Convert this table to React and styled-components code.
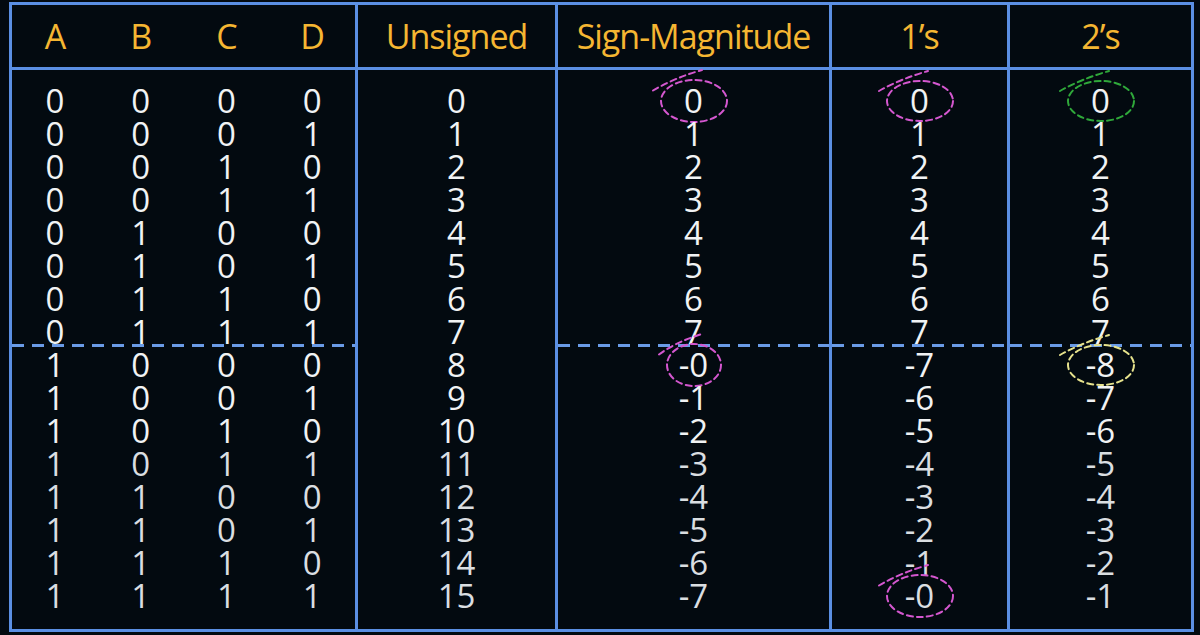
import React from 'react'
import styled, { createGlobalStyle, css } from 'styled-components'

const colors = {
  bg: '#030a10',
  line: '#5b8fe3',
  dash: '#6a9be6',
  head: '#f5b632',
  text: '#f1f3f4',
  pink: '#d457cf',
  green: '#2fa83a',
  yellow: '#e6e28c',
}

const GlobalStyle = createGlobalStyle`
  html, body {
    margin: 0;
    background: ${colors.bg};
  }
  body {
    font-family: 'Open Sans', 'Liberation Sans', sans-serif;
  }
`

const Page = styled.div`
  width: 1200px;
  height: 635px;
  padding: 2px 0 0 9px;
  box-sizing: border-box;
`

const Table = styled.div`
  display: grid;
  grid-template-columns: 343px 197px 271px 175px 181px;
  grid-template-rows: 62px 559px;
  gap: 3px;
  width: max-content;
  border: 3px solid ${colors.line};
  background: ${colors.line};
`

const HeadCell = styled.div`
  display: flex;
  align-items: center;
  justify-content: center;

  background: ${colors.bg};
  color: ${colors.head};
  font-size: 34px;
  letter-spacing: -1px;
`

const HeadBits = styled(HeadCell)`
  display: grid;
  grid-template-columns: repeat(4, 1fr);
  justify-items: center;
`

const BodyCell = styled.div`
  background: ${colors.bg};
  color: ${colors.text};
  font-size: 33px;
  line-height: 33px;
  padding-top: 14px;
`

const Half = styled.div`
  position: relative;

  ${props =>
    props.$dashed &&
    css`
      &::before {
        content: '';
        position: absolute;
        top: -4px;
        left: 0;
        right: 0;
        height: 3px;
        background: repeating-linear-gradient(
          to right,
          ${colors.dash} 0 12px,
          transparent 12px 20px
        );
      }
    `}
`

const Line = styled.div`
  height: 33px;
  display: flex;
  align-items: center;
  justify-content: center;
  color: ${props => (props.$dim ? '#dadee1' : colors.text)};
`

const BitsLine = styled(Line)`
  display: grid;
  grid-template-columns: repeat(4, 1fr);
  justify-items: center;
`

const Value = styled.span`
  position: relative;
  display: inline-block;
`

const Ring = styled.svg`
  position: absolute;
  left: 50%;
  top: 50%;
  overflow: visible;
  pointer-events: none;
`

const Circle = ({ color, rx = 32, ry = 20 }) => {
  const cx = rx + 10
  const cy = ry + 12
  const w = rx * 2 + 20
  const h = ry * 2 + 22
  const tail = `M 2 ${cy - ry * 0.5} Q ${rx * 0.7} ${cy - ry - 2} ${cx + 8} ${cy - ry - 10}`
  return (
    <Ring
      width={w}
      height={h}
      style={{ transform: `translate(${-cx}px, ${-cy}px)` }}
      viewBox={`0 0 ${w} ${h}`}
    >
      <g fill="none" stroke={color} strokeWidth="2" strokeDasharray="6 4" strokeLinecap="round">
        <ellipse cx={cx} cy={cy} rx={rx} ry={ry} />
        <path d={tail} />
      </g>
    </Ring>
  )
}

const rows = Array.from({ length: 16 }, (_, i) => ({
  bits: [(i >> 3) & 1, (i >> 2) & 1, (i >> 1) & 1, i & 1],
  unsigned: `${i}`,
  sm: i < 8 ? `${i}` : `-${i - 8}`,
  ones: i < 8 ? `${i}` : i === 15 ? '-0' : `${i - 15}`,
  twos: i < 8 ? `${i}` : `${i - 16}`,
}))

const marks = {
  sm: { 0: { color: colors.pink, rx: 33, ry: 21 }, 8: { color: colors.pink, rx: 27, ry: 21 } },
  ones: { 0: { color: colors.pink, rx: 33, ry: 20 }, 15: { color: colors.pink, rx: 33, ry: 21 } },
  twos: { 0: { color: colors.green, rx: 33, ry: 20 }, 8: { color: colors.yellow, rx: 33, ry: 20 } },
}

const ValueColumn = ({ field, dashed }) => {
  const renderRow = (row, i) => {
    const mark = marks[field] && marks[field][i]
    return (
      <Line key={i} $dim={i > 10}>
        <Value>
          {row[field]}
          {mark && <Circle {...mark} />}
        </Value>
      </Line>
    )
  }
  return (
    <BodyCell>
      <Half>{rows.slice(0, 8).map((r, i) => renderRow(r, i))}</Half>
      <Half $dashed={dashed}>{rows.slice(8).map((r, i) => renderRow(r, i + 8))}</Half>
    </BodyCell>
  )
}

const BitsRow = ({ row, dim }) => (
  <BitsLine $dim={dim}>
    {row.bits.map((b, j) => <span key={j}>{b}</span>)}
  </BitsLine>
)

const BitsColumn = () => (
  <BodyCell>
    <Half>
      {rows.slice(0, 8).map((r, i) => <BitsRow key={i} row={r} />)}
    </Half>
    <Half $dashed>
      {rows.slice(8).map((r, i) => <BitsRow key={i} row={r} dim={i + 8 > 10} />)}
    </Half>
  </BodyCell>
)

export default function App() {
  return (
    <Page>
      <GlobalStyle />
      <Table>
        <HeadBits>
          <span>A</span>
          <span>B</span>
          <span>C</span>
          <span>D</span>
        </HeadBits>
        <HeadCell>Unsigned</HeadCell>
        <HeadCell>Sign-Magnitude</HeadCell>
        <HeadCell>1’s</HeadCell>
        <HeadCell>2’s</HeadCell>

        <BitsColumn />
        <ValueColumn field="unsigned" />
        <ValueColumn field="sm" dashed />
        <ValueColumn field="ones" dashed />
        <ValueColumn field="twos" dashed />
      </Table>
    </Page>
  )
}
